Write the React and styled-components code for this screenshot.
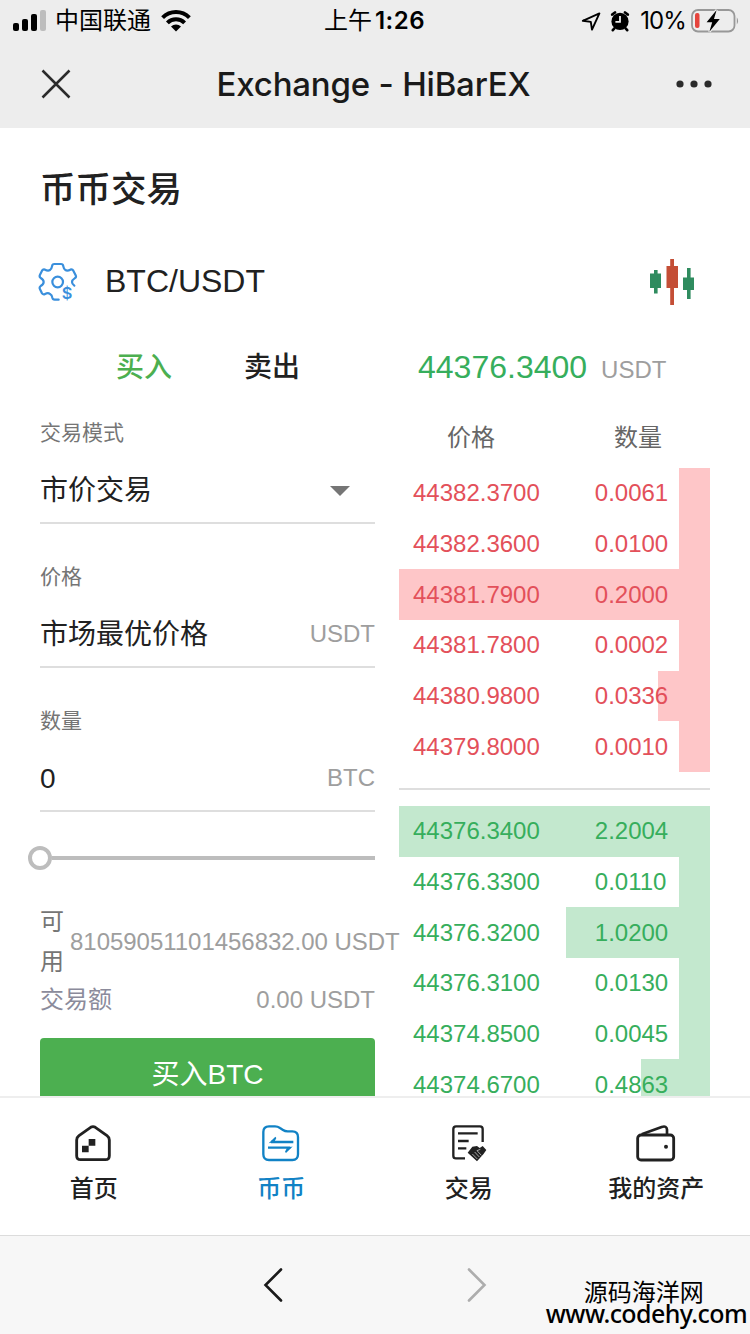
import React from "react";
import styled, { createGlobalStyle, ThemeProvider } from "styled-components";

const theme = {
  colors: {
    black: "#212121",
    grey: "#9e9e9e",
    darkGrey: "#757575",
    line: "#dedede",
    green: "#4caf50",
    rise: "#36ae5c",
    fall: "#e3505a",
    riseBg: "#c3e8ce",
    fallBg: "#fec6c8",
    blue: "#1182c5",
  },
  fonts: {
    base: `"Liberation Sans", "Noto Sans CJK SC", sans-serif`,
    system: `Inter, "Noto Sans CJK SC", sans-serif`,
  },
};

const asks = [
  { price: "44382.3700", amount: "0.0061", depth: 31 },
  { price: "44382.3600", amount: "0.0100", depth: 31 },
  { price: "44381.7900", amount: "0.2000", depth: 311 },
  { price: "44381.7800", amount: "0.0002", depth: 31 },
  { price: "44380.9800", amount: "0.0336", depth: 52 },
  { price: "44379.8000", amount: "0.0010", depth: 31 },
];

const bids = [
  { price: "44376.3400", amount: "2.2004", depth: 311 },
  { price: "44376.3300", amount: "0.0110", depth: 31 },
  { price: "44376.3200", amount: "1.0200", depth: 144 },
  { price: "44376.3100", amount: "0.0130", depth: 31 },
  { price: "44374.8500", amount: "0.0045", depth: 31 },
  { price: "44374.6700", amount: "0.4863", depth: 69 },
];

// status bar icons
const SignalIcon = () => (
  <svg width="34" height="22" viewBox="0 0 34 22">
    <rect x="0" y="13" width="6" height="8" rx="2" />
    <rect x="9" y="9" width="6" height="12" rx="2" />
    <rect x="18" y="4" width="6" height="17" rx="2" />
    <rect x="27" y="0" width="6" height="21" rx="2" fill="#bdbdbd" />
  </svg>
);

const WifiIcon = () => (
  <svg width="30" height="22" viewBox="0 0 30 22">
    <g fill="none" stroke="#000" strokeWidth="4">
      <path d="M1.6 7.6a19 19 0 0 1 26.8 0" />
      <path d="M6.4 12.8a12.2 12.2 0 0 1 17.2 0" />
    </g>
    <path d="M10 16.6a7.2 7.2 0 0 1 10 0L15 21.6z" />
  </svg>
);

const LocationIcon = () => (
  <svg width="20" height="20" viewBox="0 0 20 20">
    <path
      d="M1.8 9.8 18.4 2.4 11 18.6 9.8 10.9z"
      fill="none"
      stroke="#000"
      strokeWidth="1.9"
      strokeLinejoin="round"
    />
  </svg>
);

const AlarmIcon = () => (
  <svg width="20" height="21" viewBox="0 0 20 21">
    <circle cx="10" cy="10.4" r="8.6" />
    <path
      d="M2.2 3.6 5 1.4M17.8 3.6 15 1.4M4.4 17.4 2.8 19.2M15.6 17.4l1.6 1.8"
      stroke="#000"
      strokeWidth="2.6"
      strokeLinecap="round"
    />
    <path d="M10 5V10.8H5.4" fill="none" stroke="#ededed" strokeWidth="1.8" />
  </svg>
);

const BatteryIcon = () => (
  <svg width="50" height="24" viewBox="0 0 50 24">
    <rect
      x="1"
      y="1"
      width="42.5"
      height="21.5"
      rx="6"
      fill="none"
      stroke="#989898"
      strokeWidth="1.8"
    />
    <path d="M45.8 8.2q2.6 3.6 0 7.4z" fill="#989898" />
    <rect x="4" y="4" width="4.5" height="15" rx="2" fill="#e5443d" />
    <path
      d="M25.6 1 15.6 13.2h5.6L18.4 22.8 28.8 10h-5.8z"
      stroke="#ededed"
      strokeWidth="2.4"
      paintOrder="stroke"
    />
  </svg>
);

const CloseIcon = () => (
  <svg width="30" height="30" viewBox="0 0 30 30">
    <path d="M1.5 1.5l27 27M28.5 1.5l-27 27" stroke="#2b2b2b" strokeWidth="2.5" />
  </svg>
);

const MoreIcon = () => (
  <svg width="36" height="8" viewBox="0 0 36 8" fill="#2b2b2b">
    <circle cx="4" cy="4" r="3.6" />
    <circle cx="18" cy="4" r="3.6" />
    <circle cx="32" cy="4" r="3.6" />
  </svg>
);

// page icons
const CoinGearIcon = () => (
  <svg width="40" height="40" viewBox="0 0 120 120">
    <g fill="none" stroke="#3a8fdc" strokeWidth="6.6" strokeLinecap="round">
      <path d="M109 71Q102 66 102 60Q102 54 110 49Q116 46 113 40L106 26Q103 21 97 23Q88 28 82 24Q77 20 76 13Q75 6 69 6H49Q43 6 42 13Q41 20 36 24Q30 28 21 23Q15 21 12 26L6 38Q3 44 8 48Q17 53 17 60Q17 67 8 72Q3 76 6 82L12 94Q16 99 21 96Q30 91 36 96Q42 99 43 107Q44 113 50 113H62" />
      <circle cx="59" cy="60" r="16" />
    </g>
    <text
      x="87"
      y="111"
      textAnchor="middle"
      fontFamily="Inter"
      fontSize="49"
      fontWeight="600"
      fill="#3a8fdc"
    >
      $
    </text>
  </svg>
);

const CandleIcon = () => (
  <svg width="46" height="46" viewBox="0 0 46 46">
    <g fill="#2f8c5f">
      <rect x="0" y="14.5" width="11" height="14.5" />
      <rect x="4" y="11" width="3.6" height="23.5" />
      <rect x="33" y="18.5" width="11" height="12.5" />
      <rect x="37" y="9" width="3.6" height="31" />
    </g>
    <g fill="#c44e36">
      <rect x="16.5" y="7" width="11.5" height="22" />
      <rect x="20.2" y="0" width="3.8" height="46" />
    </g>
  </svg>
);

// tab bar icons
const HomeIcon = () => (
  <svg width="40" height="38" viewBox="0 0 120 114">
    <path
      d="M50 10Q57 6 64 10L99 35Q106 40 106 48V95Q106 107 94 107H20Q8 107 8 95V48Q8 40 15 35Z"
      fill="none"
      stroke="currentColor"
      strokeWidth="8.5"
    />
    <path d="M24 65h20v20H24zM44 45h20v20H44z" fill="currentColor" />
  </svg>
);

const CoinIcon = () => (
  <svg width="40" height="38" viewBox="0 0 120 114" fill="none" stroke="currentColor">
    <path
      d="M24 7H42Q50 7 57 12L66 18Q72 22 80 22H94Q111 22 111 39V91Q111 108 94 108H24Q7 108 7 91V24Q7 7 24 7Z"
      strokeWidth="7"
    />
    <path d="M97 54H30M21 71H88" strokeWidth="7" />
    <path
      d="M23 57.5 43 38 46 42 40 54ZM95 67.5 75 87 72 83 78 71Z"
      fill="currentColor"
      stroke="none"
    />
  </svg>
);

const TradeIcon = () => (
  <svg width="36" height="38" viewBox="0 0 108 114">
    <g fill="none" stroke="currentColor">
      <path d="M42 103H15Q7 103 7 95V15Q7 7 15 7H87Q95 7 95 15V54" strokeWidth="7" />
      <path d="M21 28H80M21 51H53M21 73H46" strokeWidth="7" />
    </g>
    <path d="M50 86 64 68 78 66 86 72 95 66 106 78 97 91 78 112Z" fill="currentColor" />
    <path
      d="M88 76 78 80 91 94M71 84 85 99M64 90 79 105"
      fill="none"
      stroke="#fff"
      strokeWidth="1.8"
    />
  </svg>
);

const WalletIcon = () => (
  <svg width="43" height="38" viewBox="0 0 129 114" fill="none" stroke="currentColor">
    <path d="M20 31 80 9Q95 4 96 17V31" strokeWidth="8" />
    <rect x="8" y="33" width="108" height="75" rx="10" strokeWidth="8.5" />
    <circle cx="93" cy="68" r="6" fill="currentColor" stroke="none" />
  </svg>
);

const Chevron = ({ d, color }) => (
  <svg width="20" height="34" viewBox="0 0 20 34">
    <path d={d} fill="none" stroke={color} strokeWidth="2.6" strokeLinecap="round" />
  </svg>
);

const tabs = [
  { label: "首页", icon: <HomeIcon /> },
  { label: "币币", icon: <CoinIcon />, active: true },
  { label: "交易", icon: <TradeIcon /> },
  { label: "我的资产", icon: <WalletIcon /> },
];

const OrderList = ({ orders, side }) => (
  <Orders>
    {orders.map(({ price, amount, depth }) => (
      <OrderRow key={price} $side={side} $depth={depth}>
        <span>{price}</span>
        <span>{amount}</span>
      </OrderRow>
    ))}
  </Orders>
);

const App = () => {
  return (
    <ThemeProvider theme={theme}>
      <GlobalStyle />
      <Phone>
        <StatusBar>
          <StatusLeft>
            <SignalIcon />
            <span>中国联通</span>
            <WifiIcon />
          </StatusLeft>
          <Clock>
            上午<b>1:26</b>
          </Clock>
          <StatusRight>
            <LocationIcon />
            <AlarmIcon />
            <span>10%</span>
            <BatteryIcon />
          </StatusRight>
        </StatusBar>

        <Header>
          <CloseIcon />
          <h1>Exchange - HiBarEX</h1>
          <MoreIcon />
        </Header>

        <Content>
          <PageTitle>币币交易</PageTitle>
          <PairRow>
            <CoinGearIcon />
            <span>BTC/USDT</span>
            <CandleIcon />
          </PairRow>

          <Columns>
            <Form>
              <SideTabs>
                <SideTab $active>买入</SideTab>
                <SideTab>卖出</SideTab>
              </SideTabs>

              <Field>
                <label>交易模式</label>
                <FieldValue>
                  <span>市价交易</span>
                  <Caret />
                </FieldValue>
              </Field>
              <Field>
                <label>价格</label>
                <FieldValue>
                  <span>市场最优价格</span>
                  <Unit>USDT</Unit>
                </FieldValue>
              </Field>
              <Field>
                <label>数量</label>
                <FieldValue>
                  <span>0</span>
                  <Unit>BTC</Unit>
                </FieldValue>
              </Field>

              <Slider>
                <Thumb />
                <Track />
              </Slider>

              <Balance>
                <span>可用</span>
                <Amount $tight>81059051101456832.00 USDT</Amount>
              </Balance>
              <Total>
                <span>交易额</span>
                <Amount>0.00 USDT</Amount>
              </Total>
              <BuyButton>买入BTC</BuyButton>
            </Form>

            <Book>
              <LastPrice>
                44376.3400<Unit>USDT</Unit>
              </LastPrice>
              <BookHead>
                <span>价格</span>
                <span>数量</span>
              </BookHead>
              <OrderList orders={asks} side="fall" />
              <BookLine />
              <OrderList orders={bids} side="rise" />
            </Book>
          </Columns>
        </Content>

        <TabBar>
          {tabs.map(({ label, icon, active }) => (
            <TabItem key={label} $active={active}>
              {icon}
              <span>{label}</span>
            </TabItem>
          ))}
        </TabBar>

        <BrowserBar>
          <Chevron d="M18 1.5 2.5 17 18 32.5" color="#1a1a1a" />
          <Chevron d="M2 1.5 17.5 17 2 32.5" color="#adadad" />
          <Watermark>
            <p>源码海洋网</p>
            <p>www.codehy.com</p>
          </Watermark>
        </BrowserBar>
      </Phone>
    </ThemeProvider>
  );
};

const GlobalStyle = createGlobalStyle`
  * {
    box-sizing: border-box;
    margin: 0;
    padding: 0;
  }

  body {
    background: #fff;
    font-family: ${({ theme }) => theme.fonts.base};
    color: ${({ theme }) => theme.colors.black};
  }

  svg {
    display: block;
    flex-shrink: 0;
  }
`;

const Phone = styled.div`
  display: flex;
  flex-direction: column;
  width: 750px;
  height: 1334px;
  overflow: hidden;
`;

const StatusBar = styled.div`
  display: grid;
  grid-template-columns: 1fr auto 1fr;
  align-items: center;
  height: 40px;
  padding: 0 9px 0 13px;
  background: #ededed;
  font-family: ${({ theme }) => theme.fonts.system};
  font-size: 24px;
  line-height: 42px;
  color: #000;
`;

const StatusLeft = styled.div`
  display: flex;
  align-items: center;

  & span {
    margin: 0 10px 0 8px;
  }

  & svg {
    margin-bottom: 1px;
  }
`;

const Clock = styled.div`
  display: flex;
  margin-left: -5px;

  & b {
    margin-left: 3px;
    font-weight: 600;
    letter-spacing: 0.5px;
  }
`;

const StatusRight = styled.div`
  display: flex;
  justify-content: flex-end;
  align-items: center;

  & svg + svg {
    margin-left: 9px;
  }

  & span {
    margin: 0 5px 0 10px;
    letter-spacing: -0.9px;
  }
`;

const Header = styled.header`
  display: flex;
  justify-content: space-between;
  align-items: center;
  height: 88px;
  padding: 0 38px 0 41px;
  background: #ededed;

  & h1 {
    font-family: ${({ theme }) => theme.fonts.system};
    font-size: 33px;
    font-weight: 500;
    letter-spacing: -0.2px;
    color: #1a1a1a;
  }
`;

const Content = styled.main`
  flex: 1;
  min-height: 0;
  padding: 0 40px;
  overflow: hidden;
`;

const PageTitle = styled.h2`
  height: 120px;
  font-size: 35.5px;
  font-weight: 500;
  line-height: 124px;
`;

const PairRow = styled.div`
  display: flex;
  align-items: center;
  height: 68px;
  padding-right: 14px;
  margin-left: -2px;
  font-size: 32px;

  & span {
    flex: 1;
    margin-left: 27px;
    padding-bottom: 2px;
  }
`;

const Columns = styled.div`
  display: grid;
  grid-template-columns: 335px 311px;
  gap: 24px;
`;

const Form = styled.div`
  min-width: 0;
`;

const SideTabs = styled.div`
  display: flex;
  gap: 72px;
  height: 102px;
  padding-left: 76px;
  line-height: 104px;
`;

const SideTab = styled.div`
  font-size: 28px;
  font-weight: 500;
  color: ${({ theme, $active }) =>
    $active ? theme.colors.green : theme.colors.black};
`;

const Field = styled.div`
  height: 144px;

  & label {
    display: block;
    height: 38px;
    font-size: 21px;
    line-height: 30px;
    color: ${({ theme }) => theme.colors.darkGrey};
  }
`;

const Unit = styled.span`
  font-size: 24px;
  color: ${({ theme }) => theme.colors.grey};
`;

const FieldValue = styled.div`
  display: flex;
  justify-content: space-between;
  align-items: center;
  height: 68px;
  padding-top: 4px;
  border-bottom: 2px solid ${({ theme }) => theme.colors.line};
  font-size: 28px;
  line-height: 60px;

  & ${Unit} {
    padding-bottom: 2px;
  }
`;

const Caret = styled.i`
  margin-right: 25px;
  border: 10px solid transparent;
  border-top-color: ${({ theme }) => theme.colors.darkGrey};
  border-bottom: 0;
`;

const Slider = styled.div`
  display: flex;
  align-items: center;
  height: 24px;
  margin: -4px 0 0 -12px;
`;

const Thumb = styled.div`
  width: 24px;
  height: 24px;
  border: 4px solid #bdbdbd;
  border-radius: 50%;
  background: #fff;
`;

const Track = styled.div`
  flex: 1;
  height: 4px;
  background: #bdbdbd;
`;

const Balance = styled.div`
  display: flex;
  align-items: center;
  margin-top: 32px;
  font-size: 24px;
  line-height: 40px;
  color: ${({ theme }) => theme.colors.darkGrey};

  & > span:first-child {
    flex: none;
    width: 30px;
    padding-right: 6px;
    word-break: break-all;
  }
`;

const Total = styled.div`
  display: flex;
  justify-content: space-between;
  height: 56px;
  font-size: 24px;
  line-height: 36px;
  color: #8b8b9b;
`;

const Amount = styled.span`
  white-space: nowrap;
  letter-spacing: ${({ $tight }) => ($tight ? "-0.03px" : "0")};
  color: ${({ theme }) => theme.colors.grey};
`;

const BuyButton = styled.button`
  display: block;
  width: 100%;
  height: 72px;
  padding-bottom: 4px;
  border: 0;
  border-radius: 4px;
  background: ${({ theme }) => theme.colors.green};
  font-family: inherit;
  font-size: 28px;
  color: #fff;
`;

const Book = styled.div`
  min-width: 0;
`;

const LastPrice = styled.div`
  height: 102px;
  padding-left: 19px;
  font-size: 32px;
  line-height: 103px;
  color: ${({ theme }) => theme.colors.rise};

  & ${Unit} {
    margin-left: 14px;
  }
`;

const BookHead = styled.div`
  display: flex;
  gap: 119px;
  height: 50px;
  padding-left: 48px;
  font-size: 24px;
  line-height: 40px;
  color: #666;
`;

const Orders = styled.div`
  display: grid;
  grid-template-rows: 51px 50px 51px 51px 50px 51px;
`;

// depth is painted from the right edge of the row
const OrderRow = styled.div`
  display: flex;
  align-items: center;
  gap: 55px;
  padding-left: 14px;
  background: linear-gradient(
      ${({ theme, $side }) => theme.colors[`${$side}Bg`]},
      ${({ theme, $side }) => theme.colors[`${$side}Bg`]}
    )
    right / ${({ $depth }) => $depth}px 100% no-repeat;
  font-size: 24px;
  color: ${({ theme, $side }) => theme.colors[$side]};

  &:nth-child(3n + 1) {
    padding-bottom: 1px;
  }
`;

const BookLine = styled.div`
  height: 2px;
  margin: 16px 0;
  background: ${({ theme }) => theme.colors.line};
`;

const TabBar = styled.nav`
  display: grid;
  grid-template-columns: repeat(4, 1fr);
  height: 139px;
  border-top: 2px solid #eee;
  background: #fff;
`;

const TabItem = styled.div`
  display: flex;
  flex-direction: column;
  align-items: center;
  padding-top: 26px;
  font-size: 24px;
  font-weight: 500;
  color: ${({ theme, $active }) =>
    $active ? theme.colors.blue : theme.colors.black};

  & span {
    margin-top: 9px;
    line-height: 36px;
  }
`;

const BrowserBar = styled.footer`
  display: flex;
  justify-content: center;
  align-items: center;
  gap: 184px;
  position: relative;
  height: 99px;
  border-top: 1px solid #dcdcdc;
  background: #f7f7f7;
`;

const Watermark = styled.div`
  position: absolute;
  right: 3px;
  bottom: 11px;
  font-family: "Noto Sans", "Noto Sans CJK SC", sans-serif;
  font-size: 24px;
  line-height: 22px;
  color: #000;

  & p:first-child {
    padding-left: 38px;
  }

  & p:last-child {
    font-size: 25px;
    font-weight: 500;
    line-height: 20px;
    letter-spacing: -0.6px;
  }
`;

export default App;
